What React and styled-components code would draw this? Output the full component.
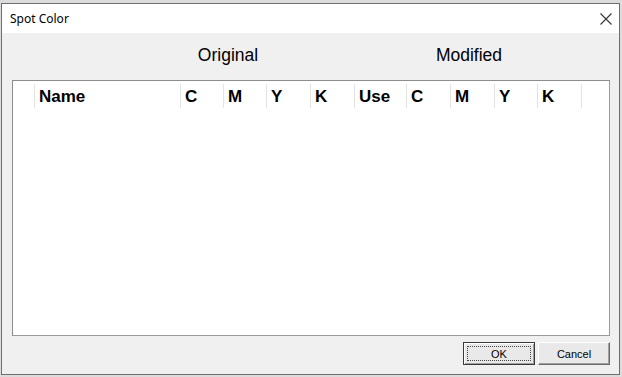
import React from 'react';
import styled, { createGlobalStyle } from 'styled-components';

const GlobalStyle = createGlobalStyle`
    html, body {
        margin: 0;
        padding: 0;
        background: #dcdcdc;
        width: 622px;
        height: 377px;
        overflow: hidden;
    }
`;

const Window = styled.div`
    box-sizing: border-box;
    margin: 3px 0 0 1px;
    width: 619px;
    height: 372px;
    border: 1px solid #6f6f6f;
    background: #f0f0f0;
    display: flex;
    flex-direction: column;
    font-family: 'Liberation Sans', Arial, sans-serif;
`;

const TitleBar = styled.div`
    height: 29px;
    background: #ffffff;
    display: flex;
    align-items: center;
    justify-content: space-between;
    padding: 0 6px 0 8px;
`;

const Title = styled.span`
    font-family: 'Noto Sans', 'Liberation Sans', sans-serif;
    font-size: 12px;
    color: #000;
`;

const CloseButton = styled.div`
    width: 14px;
    height: 14px;
    display: flex;
    align-items: center;
    justify-content: center;
`;

const Body = styled.div`
    flex: 1;
    display: flex;
    flex-direction: column;
    padding: 0 8px 0 10px;
`;

const GroupLabels = styled.div`
    height: 47px;
    display: grid;
    grid-template-columns: 135px 162px 79px 162px;
    align-items: center;
    font-size: 17.5px;
    color: #000;
`;

const GroupLabel = styled.span`
    grid-column: ${(p) => p.$col};
    text-align: center;
    padding-bottom: 2px;
`;

const ListBox = styled.div`
    box-sizing: border-box;
    width: 598px;
    height: 256px;
    border: 1px solid #8c8c8c;
    border-right-color: #9a9a9a;
    border-bottom-color: #9a9a9a;
    background: #ffffff;
`;

const HeaderRow = styled.div`
    display: flex;
    height: 28px;
    padding-top: 1px;
    box-sizing: border-box;
    align-items: center;
`;

const HeaderCell = styled.div`
    box-sizing: border-box;
    width: ${(p) => p.$w}px;
    height: 24px;
    display: flex;
    align-items: center;
    padding-left: 4px;
    padding-top: 2px;
    border-right: 1px solid #e3e3e3;
    font-weight: bold;
    font-size: 17px;
    color: #000;
    white-space: nowrap;
`;

const ButtonBar = styled.div`
    display: flex;
    justify-content: flex-end;
    gap: 3px;
    margin-top: 6px;
    padding-right: 1px;
`;

const Button = styled.button`
    box-sizing: border-box;
    width: 72px;
    height: 23px;
    padding: 0;
    font-family: 'Liberation Sans', Arial, sans-serif;
    font-size: 11px;
    color: #000;
    background: #e9e9e9;
    border: 1px solid;
    border-color: ${(p) => (p.$default ? '#3a3a3a' : '#ffffff #6a6a6a #6a6a6a #ffffff')};
    box-shadow: ${(p) =>
        p.$default
            ? 'inset 1px 1px 0 #ffffff, inset -1px -1px 0 #a0a0a0'
            : 'inset -1px -1px 0 #a0a0a0'};
    display: flex;
    align-items: center;
    justify-content: center;
    position: relative;
`;

const FocusRect = styled.span`
    position: absolute;
    inset: 3px;
    border: 1px dotted #444;
`;

const columns = [
    { w: 22, label: '' },
    { w: 146, label: 'Name' },
    { w: 43, label: 'C' },
    { w: 43, label: 'M' },
    { w: 44, label: 'Y' },
    { w: 44, label: 'K' },
    { w: 52, label: 'Use' },
    { w: 44, label: 'C' },
    { w: 44, label: 'M' },
    { w: 43, label: 'Y' },
    { w: 44, label: 'K' },
];

const CloseIcon = () => (
    <svg width="12" height="12" viewBox="0 0 12 12">
        <path d="M0.5 0.5 L11.5 11.5 M11.5 0.5 L0.5 11.5" stroke="#333" strokeWidth="1.1" fill="none" />
    </svg>
);

const App = () => {
    return (
        <>
            <GlobalStyle />
            <Window>
                <TitleBar>
                    <Title>Spot Color</Title>
                    <CloseButton>
                        <CloseIcon />
                    </CloseButton>
                </TitleBar>
                <Body>
                    <GroupLabels>
                        <GroupLabel $col={2}>Original</GroupLabel>
                        <GroupLabel $col={4}>Modified</GroupLabel>
                    </GroupLabels>
                    <ListBox>
                        <HeaderRow>
                            {columns.map((c, i) => (
                                <HeaderCell key={i} $w={c.w}>
                                    {c.label}
                                </HeaderCell>
                            ))}
                        </HeaderRow>
                    </ListBox>
                    <ButtonBar>
                        <Button $default>
                            <FocusRect />
                            OK
                        </Button>
                        <Button>Cancel</Button>
                    </ButtonBar>
                </Body>
            </Window>
        </>
    );
};

export default App;
